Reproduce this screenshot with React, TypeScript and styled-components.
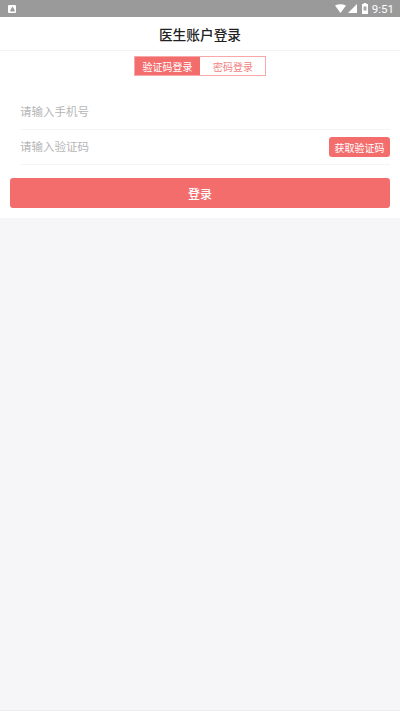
import React from "react";
import styled, { createGlobalStyle } from "styled-components";

const GlobalStyle = createGlobalStyle`
  html, body {
    margin: 0;
    padding: 0;
    background: #f6f6f8;
  }
  * {
    box-sizing: border-box;
  }
`;

const App: React.FC = () => {
  return (
    <Page>
      <GlobalStyle />
      <StatusBar>
        <AppBadge>
          <svg width="5" height="6" viewBox="0 0 5 6">
            <path d="M2.5 0.5 L4.6 4 L4.6 5.5 L0.4 5.5 L0.4 4 Z" fill="#9a9a9a" />
          </svg>
        </AppBadge>
        <StatusRight>
          <svg width="11" height="9" viewBox="0 0 11 9">
            <path d="M0 1.5 Q5.5 -1 11 1.5 L5.5 9 Z" fill="#fff" />
          </svg>
          <SignalIcon width="9" height="9" viewBox="0 0 9 9">
            <path d="M9 0 L9 9 L0 9 Z" fill="#fff" />
          </SignalIcon>
          <BatteryIcon width="6" height="11" viewBox="0 0 6 11">
            <path d="M1.7 0 H4.3 V1 H6 V11 H0 V1 H1.7 Z" fill="#fff" />
            <rect x="1.5" y="3.5" width="3" height="4" fill="#a8a8a8" />
          </BatteryIcon>
          <Clock>9:51</Clock>
        </StatusRight>
      </StatusBar>
      <Header>医生账户登录</Header>
      <Panel>
        <Tabs>
          <Tab active>验证码登录</Tab>
          <Tab>密码登录</Tab>
        </Tabs>
        <Form>
          <Field>
            <Placeholder>请输入手机号</Placeholder>
          </Field>
          <Field>
            <Placeholder>请输入验证码</Placeholder>
            <CodeButton>获取验证码</CodeButton>
          </Field>
        </Form>
        <LoginButton>登录</LoginButton>
      </Panel>
      <Footer />
    </Page>
  );
};

const Page = styled.div`
  height: 711px;
  display: flex;
  flex-direction: column;
  background: #f6f6f8;
  font-family: "Liberation Sans", "Noto Sans CJK SC", sans-serif;
  overflow: hidden;
`;

const StatusBar = styled.div`
  height: 17px;
  flex-shrink: 0;
  display: flex;
  align-items: center;
  justify-content: space-between;
  padding: 0 6px 0 8px;
  background: #9a9a9a;
`;

const AppBadge = styled.div`
  width: 8px;
  height: 8px;
  display: flex;
  align-items: center;
  justify-content: center;
  background: #fff;
  border-radius: 1px;
`;

const StatusRight = styled.div`
  display: flex;
  align-items: center;
`;

const SignalIcon = styled.svg`
  margin-left: 2px;
`;

const BatteryIcon = styled.svg`
  margin-left: 5px;
`;

const Clock = styled.span`
  margin-left: 4px;
  font-family: Roboto, sans-serif;
  font-size: 11.5px;
  color: #fff;
`;

const Header = styled.div`
  height: 34px;
  flex-shrink: 0;
  display: flex;
  align-items: center;
  justify-content: center;
  background: #fff;
  border-bottom: 1px solid #f3f3f3;
  font-size: 13.7px;
  font-weight: 500;
  color: #222;
`;

const Panel = styled.div`
  height: 167px;
  flex-shrink: 0;
  display: flex;
  flex-direction: column;
  padding: 5px 10px 0;
  background: #fff;
`;

const Tabs = styled.div`
  align-self: center;
  width: 132px;
  height: 20px;
  display: flex;
  border: 1px solid #f8a8a8;
`;

const Tab = styled.div<{ active?: boolean }>`
  width: 65px;
  padding-left: ${({ active }) => (active ? "0" : "1px")};
  display: flex;
  align-items: center;
  justify-content: center;
  font-size: 10px;
  background: ${({ active }) => (active ? "#f36d6d" : "#fff")};
  color: ${({ active }) => (active ? "#fff" : "#f37f7f")};
`;

const Form = styled.div`
  display: flex;
  flex-direction: column;
  padding: 0 0 0 10px;
  margin-top: 19px;
`;

const Field = styled.div`
  height: 35px;
  display: flex;
  align-items: flex-start;
  justify-content: space-between;
  padding-top: 9px;
  border-bottom: 1px solid #f5f5f5;
`;

const Placeholder = styled.span`
  font-size: 11.5px;
  line-height: 16px;
  color: #b6b6b6;
`;

const CodeButton = styled.div`
  width: 61px;
  height: 20px;
  margin-top: -2px;
  display: flex;
  align-items: center;
  justify-content: center;
  font-size: 10px;
  color: #fff;
  background: #f36d6d;
  border-radius: 3px;
`;

const LoginButton = styled.div`
  height: 30px;
  margin-top: 13px;
  display: flex;
  align-items: center;
  justify-content: center;
  font-size: 12px;
  font-weight: 500;
  color: #fff;
  background: #f36d6d;
  border-radius: 3px;
`;

const Footer = styled.div`
  margin-top: auto;
  height: 1px;
  background: #ececec;
`;

export default App;
